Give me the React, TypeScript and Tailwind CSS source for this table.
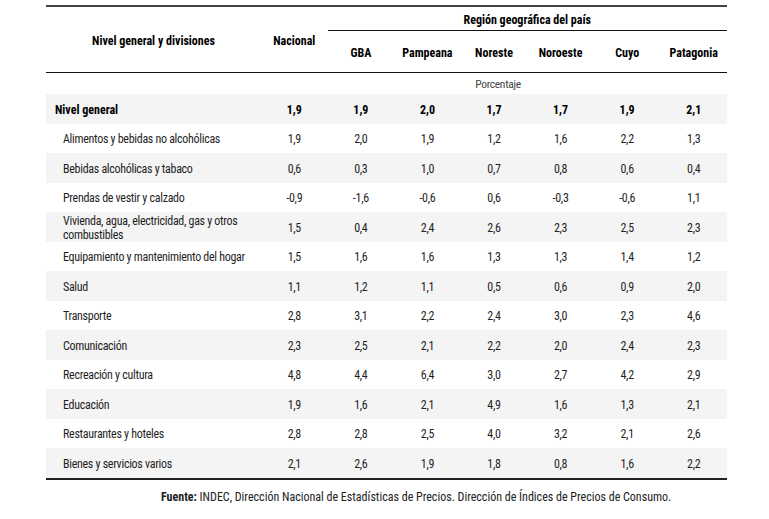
import React from "react";

type Row = { label: string; values: string[]; bold?: boolean; shaded: boolean };

const data: [string, string[]][] = [
  ["Nivel general", ["1,9", "1,9", "2,0", "1,7", "1,7", "1,9", "2,1"]],
  ["Alimentos y bebidas no alcohólicas", ["1,9", "2,0", "1,9", "1,2", "1,6", "2,2", "1,3"]],
  ["Bebidas alcohólicas y tabaco", ["0,6", "0,3", "1,0", "0,7", "0,8", "0,6", "0,4"]],
  ["Prendas de vestir y calzado", ["-0,9", "-1,6", "-0,6", "0,6", "-0,3", "-0,6", "1,1"]],
  ["Vivienda, agua, electricidad, gas y otros combustibles", ["1,5", "0,4", "2,4", "2,6", "2,3", "2,5", "2,3"]],
  ["Equipamiento y mantenimiento del hogar", ["1,5", "1,6", "1,6", "1,3", "1,3", "1,4", "1,2"]],
  ["Salud", ["1,1", "1,2", "1,1", "0,5", "0,6", "0,9", "2,0"]],
  ["Transporte", ["2,8", "3,1", "2,2", "2,4", "3,0", "2,3", "4,6"]],
  ["Comunicación", ["2,3", "2,5", "2,1", "2,2", "2,0", "2,4", "2,3"]],
  ["Recreación y cultura", ["4,8", "4,4", "6,4", "3,0", "2,7", "4,2", "2,9"]],
  ["Educación", ["1,9", "1,6", "2,1", "4,9", "1,6", "1,3", "2,1"]],
  ["Restaurantes y hoteles", ["2,8", "2,8", "2,5", "4,0", "3,2", "2,1", "2,6"]],
  ["Bienes y servicios varios", ["2,1", "2,6", "1,9", "1,8", "0,8", "1,6", "2,2"]],
];

const rows: Row[] = data.map(([label, values], i) => ({
  label,
  values,
  bold: i === 0,
  shaded: i % 2 === 0,
}));

const regions = ["GBA", "Pampeana", "Noreste", "Noroeste", "Cuyo", "Patagonia"];

export default function App() {
  return (
    <div className="w-[769px] h-[519px] bg-white text-[#1f1f1f] text-[12px] pt-[5px] pl-[46px] font-[Roboto,sans-serif] font-stretch-condensed">
      <div className="w-[681px]">
        <div className="border-t-2 border-[#444]" />
        <div className="grid grid-cols-[215px_repeat(7,1fr)] grid-rows-[24px_41px] border-b border-[#111] font-bold text-black">
          <div className="row-span-2 flex items-center justify-center pt-[2px]">Nivel general y divisiones</div>
          <div className="row-span-2 flex items-center justify-center pt-[2px]">Nacional</div>
          <div className="col-span-6 flex items-center justify-center pt-[2px] border-b border-[#111]">
            Región geográfica del país
          </div>
          {regions.map((r) => (
            <div key={r} className="flex items-center justify-center pt-[2px]">
              {r}
            </div>
          ))}
        </div>
        <div className="grid grid-cols-[215px_repeat(7,1fr)] h-[21px]">
          <div />
          <div className="col-span-7 flex items-center justify-center pl-2 pt-[2px] text-[#444] text-[11.5px] tracking-[-0.3px]">
            Porcentaje
          </div>
        </div>
        {rows.map((r) => (
          <div
            key={r.label}
            className={`grid grid-cols-[215px_repeat(7,1fr)] h-[29.5px] pt-[2px] ${
              r.shaded ? "bg-[#f4f4f4]" : "bg-white"
            } ${r.bold ? "font-bold text-black" : "tracking-[-0.3px]"}`}
          >
            <div className={`flex items-center leading-[14px] pr-1 ${r.bold ? "pl-[9px]" : "pl-[17px]"}`}>
              {r.label}
            </div>
            {r.values.map((v, j) => (
              <div key={j} className="flex items-center justify-center">
                {v}
              </div>
            ))}
          </div>
        ))}
        <div className="border-t-2 border-[#222]" />
      </div>
      <div className="pt-[8px] pl-[115px] text-[12px] text-[#222]">
        <span className="font-bold">Fuente:</span> INDEC, Dirección Nacional de Estadísticas de Precios. Dirección de
        Índices de Precios de Consumo.
      </div>
    </div>
  );
}
